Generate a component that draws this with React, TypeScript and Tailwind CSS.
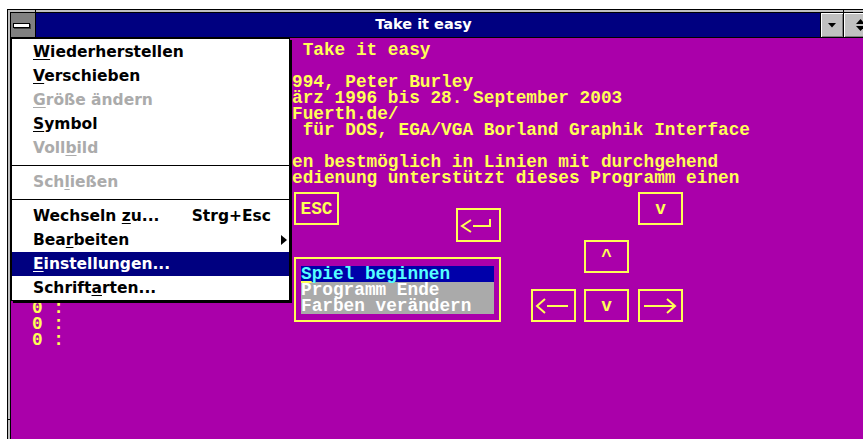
import React from 'react';

// DOS text mode look: 80 columns over the client width, 16px rows
const dos = "font-['Liberation_Mono','DejaVu_Sans_Mono',monospace] font-bold text-[17.75px] leading-4 whitespace-pre";
const win = "font-['DejaVu_Sans','Liberation_Sans',sans-serif] font-bold";

type MenuEntry =
  | {
      kind: 'item';
      before: string;
      hot: string;
      after: string;
      disabled?: boolean;
      active?: boolean;
      shortcut?: string;
      submenu?: boolean;
    }
  | { kind: 'sep' };

const systemMenu: MenuEntry[] = [
  { kind: 'item', before: '', hot: 'W', after: 'iederherstellen' },
  { kind: 'item', before: '', hot: 'V', after: 'erschieben' },
  { kind: 'item', before: '', hot: 'G', after: 'röße ändern', disabled: true },
  { kind: 'item', before: '', hot: 'S', after: 'ymbol' },
  { kind: 'item', before: 'Voll', hot: 'b', after: 'ild', disabled: true },
  { kind: 'sep' },
  { kind: 'item', before: 'Sch', hot: 'l', after: 'ießen', disabled: true },
  { kind: 'sep' },
  { kind: 'item', before: 'Wechseln ', hot: 'z', after: 'u...', shortcut: 'Strg+Esc' },
  { kind: 'item', before: 'Bea', hot: 'r', after: 'beiten', submenu: true },
  { kind: 'item', before: '', hot: 'E', after: 'instellungen...', active: true },
  { kind: 'item', before: 'Schrift', hot: 'a', after: 'rten...' },
];

const intro = [
  ' Take it easy',
  '',
  '994, Peter Burley',
  'ärz 1996 bis 28. September 2003',
  'Fuerth.de/',
  ' für DOS, EGA/VGA Borland Graphik Interface',
  '',
  'en bestmöglich in Linien mit durchgehend',
  'edienung unterstützt dieses Programm einen',
];

const Key: React.FC<{ className?: string; children: React.ReactNode }> = ({ className = '', children }) => (
  <div className={`w-[45px] h-[33px] border-2 border-[#ffff55] flex items-center justify-center text-[#ffff55] ${className}`}>
    {children}
  </div>
);

const SystemMenu: React.FC = () => (
  <div className={`${win} absolute left-0 top-0 w-[279px] bg-white border border-black pt-px shadow-[2px_2px_0_#000] text-[15.5px] leading-6`}>
    {systemMenu.map((entry, i) =>
      entry.kind === 'sep' ? (
        <div key={i} className="h-[10px] pt-[5px]">
          <div className="h-px bg-black" />
        </div>
      ) : (
        <div
          key={i}
          className={`flex h-6 items-center pl-[21px] ${entry.shortcut ? 'pr-[18px]' : 'pr-[2px]'} ${
            entry.active ? 'bg-[#000080] text-white' : entry.disabled ? 'text-[#ababab]' : 'text-black'
          }`}
        >
          <span className="flex-1">
            {entry.before}
            <span className="underline decoration-1 underline-offset-[2px]">{entry.hot}</span>
            {entry.after}
          </span>
          {entry.shortcut && <span>{entry.shortcut}</span>}
          {entry.submenu && (
            <svg width="6" height="10" viewBox="0 0 6 10">
              <polygon points="0,0 6,5 0,10" fill="#000" />
            </svg>
          )}
        </div>
      )
    )}
  </div>
);

const TitleBar: React.FC = () => (
  <div className="flex h-[25px] border-b border-black shrink-0">
    <div className="w-[25px] border-r border-black bg-[#808080] flex items-center pl-[2px]">
      <div className="w-[17px] h-[5px] bg-white border border-black shadow-[1px_1px_0_#404040]" />
    </div>
    <div className={`${win} flex-1 bg-[#000080] text-white text-[14.5px] flex items-center justify-center pr-[9px]`}>
      Take it easy
    </div>
    <div className="w-[23px] border-l border-black bg-[#c0c0c0] shadow-[inset_1px_1px_0_#fff,inset_-1px_-1px_0_#808080] flex items-center justify-center">
      <svg width="8" height="5" viewBox="0 0 8 5">
        <polygon points="0,0 8,0 4,4.5" fill="#000" />
      </svg>
    </div>
    <div className="w-[27px] border-l border-black bg-[#c0c0c0] shadow-[inset_1px_1px_0_#fff,inset_-1px_-1px_0_#808080] flex flex-col items-center justify-center gap-[2px] pl-[6px]">
      <svg width="9" height="5" viewBox="0 0 9 5">
        <polygon points="0,5 9,5 4.5,0" fill="#000" />
      </svg>
      <svg width="9" height="5" viewBox="0 0 9 5">
        <polygon points="0,0 9,0 4.5,5" fill="#000" />
      </svg>
    </div>
  </div>
);

const Arrow: React.FC<{ d: string }> = ({ d }) => (
  <svg width="41" height="29" viewBox="0 0 41 29" className="shrink-0">
    <path d={d} fill="none" stroke="#ffff55" strokeWidth="2" />
  </svg>
);

const App: React.FC = () => {
  return (
    <div className="w-[863px] h-[439px] overflow-hidden bg-white">
      {/* window frame: black / grey / black */}
      <div className="relative ml-[7px] mt-[9px] w-[867px] h-[440px] border border-black bg-[#c0c0c0] p-[2px]">
        <div className="absolute left-[27px] -top-px w-px h-[4px] bg-black" />
        <div className="absolute left-[835px] -top-px w-px h-[4px] bg-black" />
        <div className="absolute -left-px top-[409px] w-[4px] h-px bg-black" />

        <div className="h-full border border-black flex flex-col">
          <TitleBar />

          <div className={`${dos} relative flex-1 bg-[#aa00aa] text-[#ffff55] pt-[4px]`}>
            <div className="pl-[281px]">
              {intro.map((line, i) => (
                <div key={i} className="h-4">
                  {line}
                </div>
              ))}
            </div>

            <div className="flex mt-[6px]">
              {/* score list */}
              <div className="w-[283px] pl-[21px] pt-[108px]">
                <div className="h-4">0 :</div>
                <div className="h-4">0 :</div>
                <div className="h-4">0 :</div>
              </div>

              {/* ESC / Enter keys and the game menu */}
              <div className="w-[207px]">
                <div className="flex items-start">
                  <Key>ESC</Key>
                  <div className="ml-[117px] mt-[16px] w-[45px] h-[34px] border-2 border-[#ffff55] flex items-center justify-center">
                    <Arrow d="M13 9 L4 15 L13 21 M15 15 H32 V8" />
                  </div>
                </div>
                <div className="mt-[15px] h-[65px] border-2 border-[#ffff55] pl-[5px] pt-[7px]">
                  <div className="w-[193px]">
                    <div className="h-4 bg-[#0000aa] text-[#55ffff]">
                      <span className="underline decoration-[#ffff55] decoration-2 underline-offset-[2px]">S</span>piel beginnen
                    </div>
                    <div className="h-4 bg-[#aaaaaa] text-white">Programm Ende</div>
                    <div className="h-4 bg-[#aaaaaa] text-white">Farben verändern</div>
                  </div>
                </div>
              </div>

              {/* cursor keys */}
              <div className="ml-[30px]">
                <Key className="ml-[107px]">v</Key>
                <Key className="ml-[53px] mt-[15px]">^</Key>
                <div className="flex mt-[16px]">
                  <Key>
                    <Arrow d="M12 8 L4 15 L12 22 M14 15 H35" />
                  </Key>
                  <Key className="ml-[8px]">v</Key>
                  <Key className="ml-[9px]">
                    <Arrow d="M4 15 H34 M27 8 L35 15 L27 22" />
                  </Key>
                </div>
              </div>
            </div>

            <SystemMenu />
          </div>
        </div>
      </div>
    </div>
  );
};

export default App;
